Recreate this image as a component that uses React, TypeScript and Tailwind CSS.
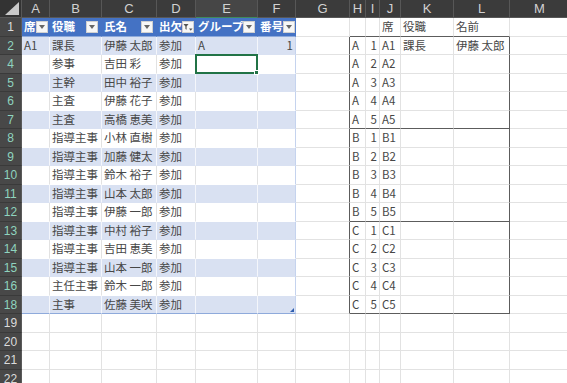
const COLS = [
  { k: 'A', w: 28 },
  { k: 'B', w: 52 },
  { k: 'C', w: 55 },
  { k: 'D', w: 39 },
  { k: 'E', w: 62 },
  { k: 'F', w: 38 },
  { k: 'G', w: 54 },
  { k: 'H', w: 16 },
  { k: 'I', w: 14 },
  { k: 'J', w: 21 },
  { k: 'K', w: 53 },
  { k: 'L', w: 56 },
  { k: 'M', w: 60 },
]

const ROW_LABELS = ['1', '2', '4', '5', '6', '7', '8', '9', '10', '11', '12', '13', '14', '15', '16', '18', '19', '20', '21', '22']

const HEAD = ['席', '役職', '氏名', '出欠', 'グループ', '番号']

const PEOPLE: string[][] = [
  ['A1', '課長', '伊藤 太郎', '参加', 'A', '1'],
  ['', '参事', '吉田 彩', '参加', '', ''],
  ['', '主幹', '田中 裕子', '参加', '', ''],
  ['', '主査', '伊藤 花子', '参加', '', ''],
  ['', '主査', '高橋 恵美', '参加', '', ''],
  ['', '指導主事', '小林 直樹', '参加', '', ''],
  ['', '指導主事', '加藤 健太', '参加', '', ''],
  ['', '指導主事', '鈴木 裕子', '参加', '', ''],
  ['', '指導主事', '山本 太郎', '参加', '', ''],
  ['', '指導主事', '伊藤 一郎', '参加', '', ''],
  ['', '指導主事', '中村 裕子', '参加', '', ''],
  ['', '指導主事', '吉田 恵美', '参加', '', ''],
  ['', '指導主事', '山本 一郎', '参加', '', ''],
  ['', '主任主事', '鈴木 一郎', '参加', '', ''],
  ['', '主事', '佐藤 美咲', '参加', '', ''],
]

const SEATS = ['A', 'B', 'C']

function Dropdown({ filtered }: { filtered?: boolean }) {
  return (
    <span className="ml-auto mr-[1px] flex h-[12px] w-[12px] shrink-0 items-center justify-center border border-[#d0d0d0] bg-[#f7f7f7]">
      {filtered ? (
        <svg width="10" height="9" viewBox="0 0 10 9">
          <path d="M0.5 1h5L3.6 3.6v3.2l-1.2-0.8V3.6z" fill="#555" />
          <path d="M6 5.5h3.5L7.75 7.8z" fill="#555" />
        </svg>
      ) : (
        <svg width="6" height="4" viewBox="0 0 6 4">
          <path d="M0 0h6L3 4z" fill="#666" />
        </svg>
      )}
    </span>
  )
}

function Cell({ r, c }: { r: number; c: number }) {
  const w = COLS[c].w
  let bg = 'bg-white'
  let right = 'border-r-[#e2e2e2]'
  let bottom = 'border-b-[#e2e2e2]'
  let text = 'text-[#474747]'
  let content: React.ReactNode = null
  let align = 'justify-start'

  // left table A..F
  if (c <= 5 && r <= 15) {
    if (r === 0) {
      bg = 'bg-[#4472c4]'
      right = 'border-r-[#4472c4]'
      bottom = 'border-b-[#8eaadb]'
      text = 'text-white font-bold'
      content = (
        <>
          <span>{HEAD[c]}</span>
          <Dropdown filtered={c === 3} />
        </>
      )
    } else {
      const blue = r % 2 === 1
      bg = blue ? 'bg-[#d9e1f2]' : 'bg-white'
      right = blue ? 'border-r-[#f4f6fb]' : 'border-r-[#e2e2e2]'
      bottom = blue ? 'border-b-[#d9e1f2]' : 'border-b-white'
      if (c === 5) right = 'border-r-[#c5d3ee]'
      if (r === 15) bottom = 'border-b-[#8eaadb]'
      const v = PEOPLE[r - 1][c]
      if (c === 5) align = 'justify-end'
      content = v
    }
  }

  // right box H..L
  if (c >= 7 && c <= 11) {
    if (r === 0) {
      if (c === 9) content = '席'
      if (c === 10) content = '役職'
      if (c === 11) content = '名前'
      bottom = 'border-b-[#5c5c5c]'
    } else if (r <= 15) {
      const g = Math.floor((r - 1) / 5)
      const n = ((r - 1) % 5) + 1
      if (c === 7) content = SEATS[g]
      if (c === 8) {
        content = String(n)
        align = 'justify-end'
      }
      if (c === 9) content = SEATS[g] + n
      if (r === 1 && c === 10) content = '課長'
      if (r === 1 && c === 11) content = '伊藤 太郎'
      if (r % 5 === 0) bottom = 'border-b-[#5c5c5c]'
    }
    if (c === 11 && r >= 1 && r <= 15) right = 'border-r-[#5c5c5c]'
  }
  if (c === 6 && r >= 1 && r <= 15) right = 'border-r-[#5c5c5c]'

  const selected = r === 2 && c === 4

  return (
    <div
      className={`relative flex h-full shrink-0 items-center overflow-visible whitespace-nowrap border-r border-b px-[2px] ${bg} ${right} ${bottom} ${text} ${align}`}
      style={{ width: w }}
    >
      {content}
      {selected && (
        <div className="pointer-events-none absolute -left-[1px] -top-[1px] bottom-[-1px] right-[-1px] z-10 border-2 border-[#217346]">
          <div className="absolute -bottom-[3px] -right-[3px] h-[5px] w-[5px] border border-white bg-[#217346]" />
        </div>
      )}
      {r === 15 && c === 5 && (
        <svg className="absolute bottom-[1px] right-[1px]" width="4" height="4" viewBox="0 0 4 4">
          <path d="M4 0v4H0z" fill="#2f5fb0" />
        </svg>
      )}
    </div>
  )
}

export default function App() {
  return (
    <div
      className="h-[383px] w-[567px] overflow-hidden bg-white text-[11.5px] leading-none"
      style={{ fontFamily: '"Noto Sans CJK JP", "Noto Sans", sans-serif' }}
    >
      {/* column letters */}
      <div className="flex h-[18px] bg-[#3b3b3b]">
        <div className="flex h-full w-[22px] shrink-0 items-end justify-end border-r border-b border-[#575757] bg-[#333] pb-[2px] pr-[2px]">
          <svg width="14" height="13" viewBox="0 0 14 13">
            <path d="M14 0v13H0z" fill="#c9c9c9" />
          </svg>
        </div>
        {COLS.map((col) => (
          <div
            key={col.k}
            className={`flex h-full shrink-0 items-center justify-center border-r border-b border-r-[#575757] text-[13px] text-[#d2d2d2] ${
              col.k === 'E' ? 'border-b-[#3f8a5e] bg-[#464646]' : 'border-b-[#575757]'
            }`}
            style={{ width: col.w, fontFamily: '"Liberation Sans", Arial, sans-serif' }}
          >
            {col.k}
          </div>
        ))}
      </div>

      {ROW_LABELS.map((label, r) => (
        <div key={label} className={`flex ${r % 2 === 0 ? 'h-[19px]' : 'h-[18px]'}`}>
          <div
            className={`flex h-full w-[22px] shrink-0 items-center justify-center border-r border-b border-b-[#3a3a3a] border-r-[#5a5a5a] text-[12px] ${
              label === '4' ? 'bg-[#525252]' : 'bg-[#484848]'
            } ${r >= 1 && r <= 15 ? 'text-[#8fd4bf]' : 'text-[#dcdcdc]'}`}
            style={{ fontFamily: '"Liberation Sans", Arial, sans-serif' }}
          >
            {label}
          </div>
          {COLS.map((col, c) => (
            <Cell key={col.k} r={r} c={c} />
          ))}
        </div>
      ))}
    </div>
  )
}
